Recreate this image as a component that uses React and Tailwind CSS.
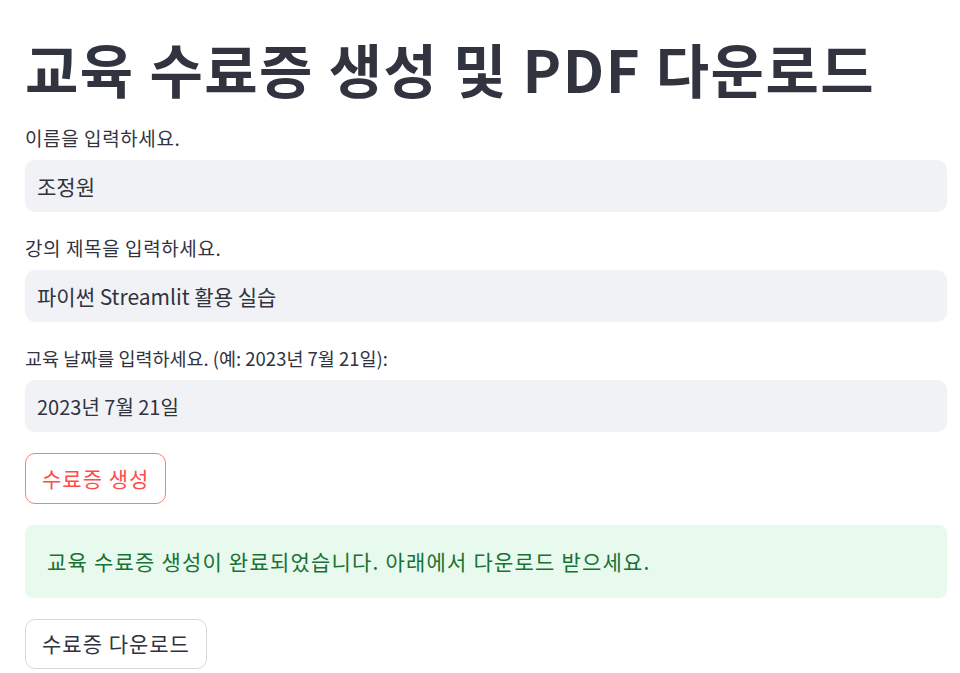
import React, { useState } from 'react';

const FONT = { fontFamily: '"Noto Sans CJK KR", "Noto Sans", sans-serif' };

// 입력 필드 목록 (label/input 크기는 원본 폭에 맞춤)
const FIELDS = [
  { label: '이름을 입력하세요.', value: '조정원', labelCls: 'text-[19px] tracking-[0.6px]', inputCls: 'text-[21px]' },
  { label: '강의 제목을 입력하세요.', value: '파이썬 Streamlit 활용 실습', labelCls: 'text-[19px] tracking-[0.6px]', inputCls: 'text-[21px]' },
  { label: '교육 날짜를 입력하세요. (예: 2023년 7월 21일):', value: '2023년 7월 21일', labelCls: 'text-[18.5px]', inputCls: 'text-[20px]' },
];

const TextField = ({ label, value, onChange, labelCls, inputCls }) => (
  <div className="flex flex-col">
    <label className={`h-[30px] leading-[30px] mb-[7px] text-[#31333f] ${labelCls}`}>
      {label}
    </label>
    <input
      type="text"
      value={value}
      onChange={onChange}
      className={`h-[52px] w-full px-[12px] rounded-[10px] bg-[#f0f2f6] text-[#31333f] outline-none ${inputCls}`}
      style={FONT}
    />
  </div>
);

const App = () => {
  const [values, setValues] = useState(FIELDS.map((f) => f.value));

  const handleChange = (i) => (e) => {
    const next = [...values];
    next[i] = e.target.value;
    setValues(next);
  };

  return (
    <div className="min-h-[673px] bg-white px-[25px] pr-[13px] pt-[35px]" style={FONT}>
      <h1 className="text-[58px] leading-[67px] font-bold text-[#31333f] tracking-[1.5px]">
        교육 수료증 생성 및 PDF 다운로드
      </h1>

      <div className="flex flex-col gap-[21px] mt-[21px]">
        {FIELDS.map((f, i) => (
          <TextField
            key={i}
            label={f.label}
            value={values[i]}
            labelCls={f.labelCls}
            inputCls={f.inputCls}
            onChange={handleChange(i)}
          />
        ))}

        <div>
          <button
            type="button"
            className="h-[51px] px-[16px] rounded-[10px] border border-[#ff7a7a] bg-white
                       text-[21px] tracking-[1px] text-[#ff4b4b]"
          >
            수료증 생성
          </button>
        </div>

        {/* Success message */}
        <div className="h-[73px] flex items-center px-[22px] rounded-[8px] bg-[#e8f9ee]
                        text-[21px] tracking-[1.2px] text-[#177233]">
          교육 수료증 생성이 완료되었습니다. 아래에서 다운로드 받으세요.
        </div>

        <div>
          <button
            type="button"
            className="h-[50px] px-[16px] rounded-[10px] border border-[#d6d6d9] bg-white
                       text-[21px] tracking-[1px] text-[#31333f]"
          >
            수료증 다운로드
          </button>
        </div>
      </div>
    </div>
  );
};

export default App;
